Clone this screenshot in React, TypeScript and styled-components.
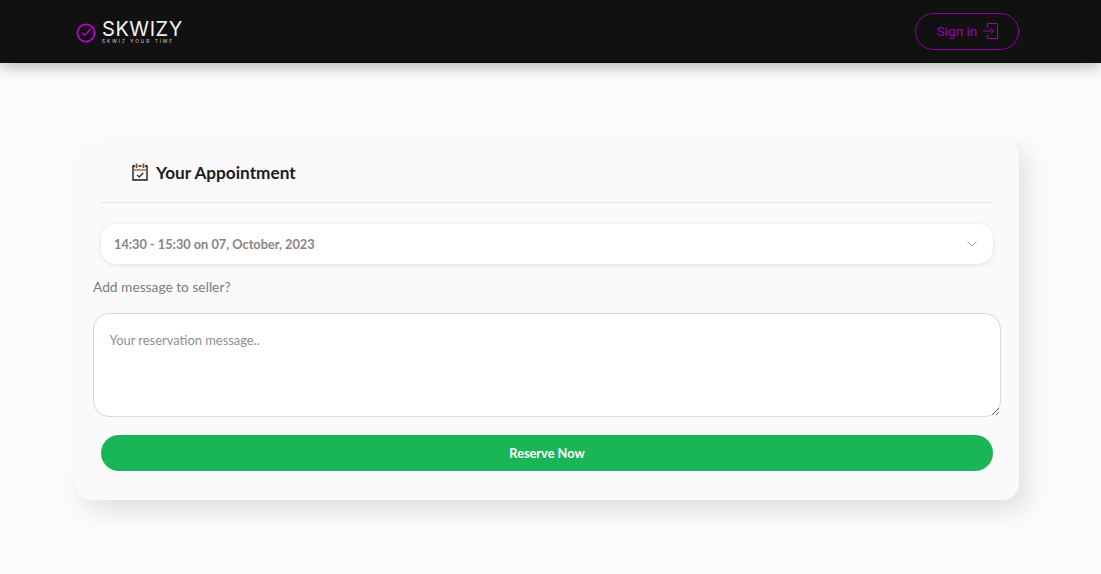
import { createGlobalStyle, styled } from "styled-components";

const GlobalStyle = createGlobalStyle`
  html, body {
    margin: 0;
    padding: 0;
    background: #fbfbfb;
    font-family: "Lato", "Open Sans", sans-serif;
  }
  * {
    box-sizing: border-box;
  }
`;

const Page = styled.div`
  width: 100%;
  height: 574px;
  overflow: hidden;
  background: #fbfbfb;
`;

const Header = styled.header`
  height: 63px;
  padding: 0 82px 0 76px;
  display: flex;
  align-items: center;
  justify-content: space-between;
  background: #111111;
  box-shadow: 0 4px 14px rgba(0, 0, 0, 0.26);
`;

const Logo = styled.div`
  display: flex;
  align-items: center;
  gap: 6px;
  padding-top: 3px;
`;

const LogoText = styled.div`
  display: flex;
  flex-direction: column;
  margin-top: -3px;
`;

const LogoName = styled.span`
  font-family: "Inter", sans-serif;
  font-size: 20px;
  line-height: 20px;
  letter-spacing: 0.55px;
  color: #f2f2f2;
`;

const LogoTagline = styled.span`
  font-family: "Inter", sans-serif;
  font-size: 4.6px;
  line-height: 6px;
  letter-spacing: 2.05px;
  color: #d5d5d5;
  white-space: nowrap;
`;

const SignIn = styled.button`
  width: 104px;
  height: 37px;
  display: flex;
  align-items: center;
  justify-content: center;
  gap: 6px;
  padding: 0 0 2px 2px;
  background: transparent;
  border: 1px solid #8e01a4;
  border-radius: 19px;
  color: #a000b8;
  font-family: "Roboto", sans-serif;
  font-size: 13.5px;
`;

const Main = styled.main`
  padding: 77px 82px 0 76px;
`;

const Card = styled.section`
  height: 360px;
  padding: 0 18px 0 17px;
  border-radius: 16px;
  background: #fafafa;
  box-shadow: 8px 10px 24px rgba(0, 0, 0, 0.11), -8px -8px 14px rgba(255, 255, 255, 0.7);
`;

const CardTitle = styled.div`
  height: 63px;
  margin: 0 8px;
  padding: 2px 0 0 31px;
  display: flex;
  align-items: center;
  gap: 8px;
  border-bottom: 1px solid #e6e6e6;
`;

const Heading = styled.h2`
  margin: 0;
  font-size: 17.2px;
  font-weight: 700;
  color: #1c1c1c;
`;

const DateSelect = styled.div`
  height: 40px;
  margin: 21px 8px 0;
  padding: 0 16px 0 13px;
  display: flex;
  align-items: center;
  justify-content: space-between;
  background: #ffffff;
  border-radius: 15px;
  box-shadow: 0 1px 5px rgba(0, 0, 0, 0.1);
  color: #8a8483;
  font-size: 12.75px;
  font-weight: 700;
`;

const FieldLabel = styled.label`
  display: block;
  margin-top: 14px;
  font-size: 13.75px;
  line-height: 17px;
  color: #807c7b;
`;

const Message = styled.textarea`
  display: block;
  width: 908px;
  height: 104px;
  margin-top: 18px;
  padding: 18px 15.5px;
  background: #ffffff;
  border: 1px solid #d8d8d8;
  border-radius: 16px;
  outline: none;
  font-family: "Lato", sans-serif;
  font-size: 12.9px;

  &::placeholder {
    color: #8f8f8f;
    opacity: 1;
  }
`;

const Reserve = styled.button`
  display: block;
  width: 892px;
  height: 36px;
  margin: 18px 8px 0;
  background: #1ab556;
  border: none;
  border-radius: 18px;
  color: #ffffff;
  font-family: "Lato", sans-serif;
  font-size: 12.75px;
  font-weight: 700;
`;

function ClockMark() {
  return (
    <svg width="20" height="20" viewBox="0 0 20 20" fill="none" stroke="#c400d8" strokeWidth="1.7">
      <circle cx="10" cy="10" r="8.6" />
      <path d="M6 10 L9 12.4 L14.6 5.8" strokeWidth="1.4" />
    </svg>
  );
}

function SignInIcon() {
  return (
    <svg width="16" height="16" viewBox="0 0 16 16" fill="none" stroke="#a000b8" strokeWidth="1">
      <path d="M4.5 4.5 V0.5 H14.5 V15.5 H4.5 V11.5" />
      <path d="M0 8 H10.5 M7.5 5 L10.5 8 L7.5 11" />
    </svg>
  );
}

function CalendarCheck() {
  return (
    <svg width="16" height="18" viewBox="0 0 16 18" fill="none" stroke="#1c1c1c" strokeWidth="1.4">
      <path d="M3 3 H1 V17 H15 V3 H13 M6.5 3 H9.5" />
      <path d="M1 7 H15" stroke="#a3692a" />
      <path d="M4.5 0.6 V5 M11.5 0.6 V5" stroke="#7a4f20" strokeWidth="1.8" />
      <path d="M5 11.8 L7.2 14 L11.2 10" strokeWidth="1.2" />
    </svg>
  );
}

function Chevron() {
  return (
    <svg width="10" height="6" viewBox="0 0 10 6" fill="none" stroke="#a9a9a9" strokeWidth="1">
      <path d="M0.5 0.5 L5 5 L9.5 0.5" />
    </svg>
  );
}

export default function App() {
  return (
    <Page>
      <GlobalStyle />
      <Header>
        <Logo>
          <ClockMark />
          <LogoText>
            <LogoName>SKWIZY</LogoName>
            <LogoTagline>SKWIZ YOUR TIME</LogoTagline>
          </LogoText>
        </Logo>
        <SignIn>
          Sign in
          <SignInIcon />
        </SignIn>
      </Header>
      <Main>
        <Card>
          <CardTitle>
            <CalendarCheck />
            <Heading>Your Appointment</Heading>
          </CardTitle>
          <DateSelect>
            14:30 - 15:30 on 07, October, 2023
            <Chevron />
          </DateSelect>
          <FieldLabel>Add message to seller?</FieldLabel>
          <Message placeholder="Your reservation message.." />
          <Reserve>Reserve Now</Reserve>
        </Card>
      </Main>
    </Page>
  );
}
